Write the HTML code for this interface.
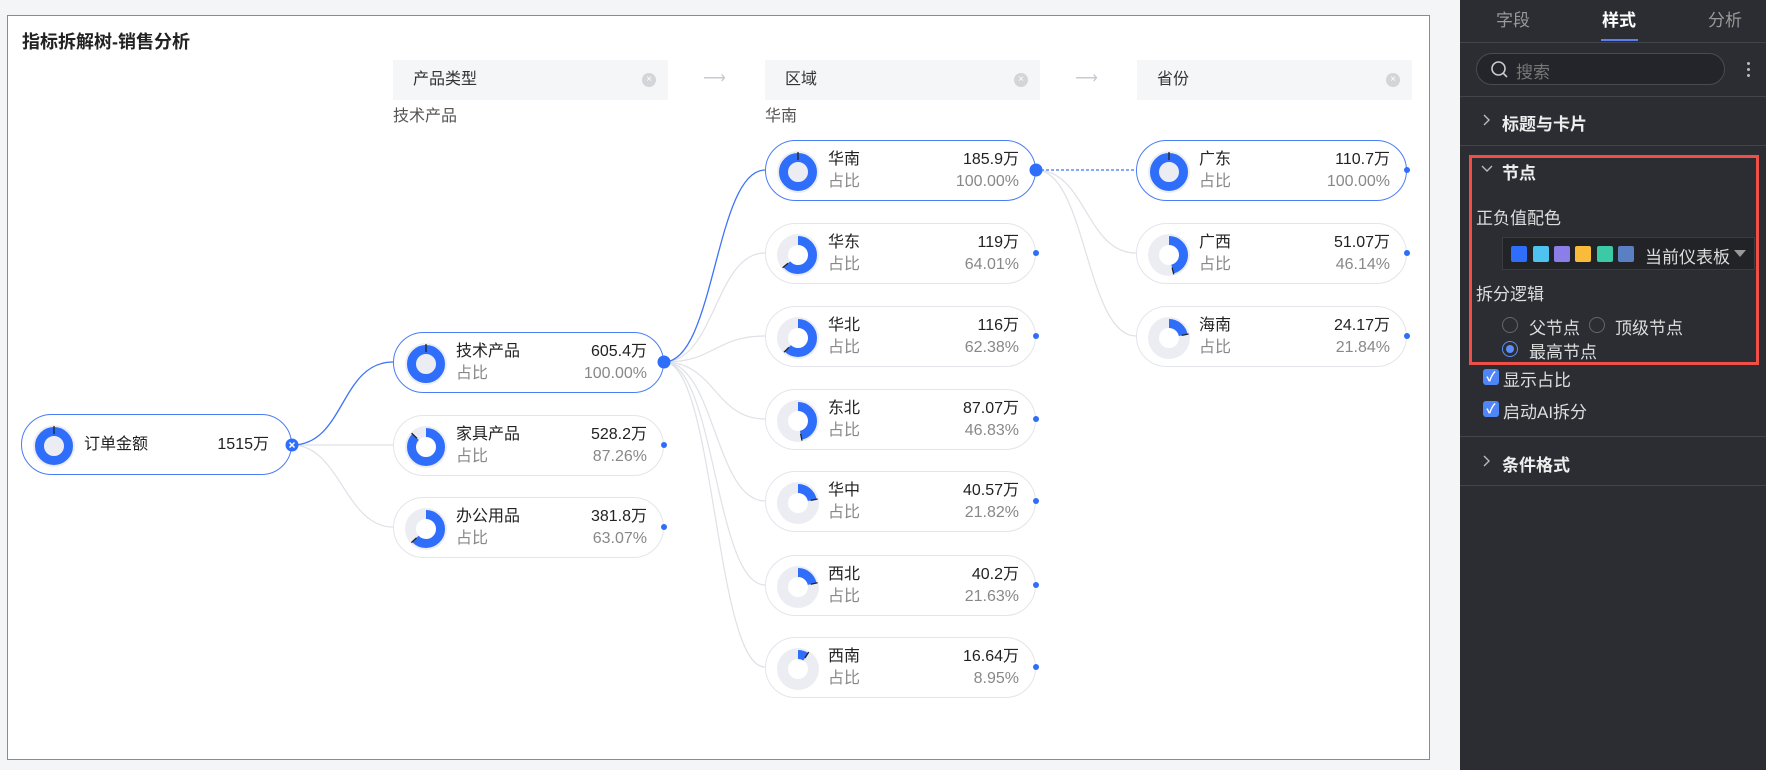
<!DOCTYPE html>
<html><head><meta charset="utf-8"><style>
*{box-sizing:border-box;margin:0;padding:0}
body{width:1766px;height:770px;background:#f4f5f7;position:relative;overflow:hidden;font-family:"Liberation Sans","Noto Sans CJK SC",sans-serif;color:#333}
.card{position:absolute;left:7px;top:15px;width:1423px;height:745px;background:#fff;border:1.5px solid #5b8ef8}
.title{position:absolute;left:22px;top:28px;font-size:18px;font-weight:bold;color:#222}
.hd{position:absolute;top:60px;width:275px;height:40px;background:#f5f6f8;font-size:16px;line-height:40px;padding-left:20px;color:#333}
.hd i{position:absolute;right:12px;top:13px;width:14px;height:14px;border-radius:50%;background:#d4d5d9;color:#fff;font-style:normal;font-size:10px;line-height:14px;text-align:center}
.arr{position:absolute;top:68px;color:#c8cad0;font-size:16px}
.sub{position:absolute;top:102px;font-size:16px;color:#555}
.n{position:absolute;width:271px;height:61px;border:1px solid #e3e5ea;border-radius:31px;background:#fff}
.n.a{border-color:#4a7cf7}
.n svg{position:absolute;left:10px;top:9px}
.t1,.t2,.v1,.v2{position:absolute;font-size:16px;line-height:20px;white-space:nowrap}
.t1{left:62px;top:9px;color:#222}.t2{left:62px;top:31px;color:#888}
.v1{right:16px;top:9px;color:#222}.v2{right:16px;top:31px;color:#888}
.t0{left:62px;top:20px;color:#222}.v0{right:22px;top:20px;color:#222}
.panel{position:absolute;left:1460px;top:0;width:306px;height:770px;background:#2c2d32}
.pt{position:absolute;font-size:17px;white-space:nowrap;color:#ddd}
.b{font-weight:bold;color:#eee}
.sw{position:absolute;top:246px;width:16px;height:16px;border-radius:2px}
.rd{position:absolute;width:16px;height:16px;border-radius:50%;border:1px solid #666}
.cb{position:absolute;left:1483px;width:16px;height:16px;border-radius:3px;background:#4f86f7;color:#fff;font-size:13px;line-height:16px;text-align:center;font-weight:bold}
</style></head><body>
<div class="card"></div>
<div class="title">指标拆解树-销售分析</div>

<div class="hd" style="left:393px">产品类型<i>×</i></div>
<div class="hd" style="left:765px">区域<i>×</i></div>
<div class="hd" style="left:1137px">省份<i>×</i></div>
<div class="arr" style="left:703px">⟶</div>
<div class="arr" style="left:1075px">⟶</div>
<div class="sub" style="left:393px">技术产品</div>
<div class="sub" style="left:765px">华南</div>

<svg style="position:absolute;left:0;top:0" width="1460" height="770">
<g fill="none" stroke="#dfe1e7" stroke-width="1.2">
<path d="M292 445 C340 445,345 445,393 445"/>
<path d="M292 445 C340 445,345 527,393 527"/>
<path d="M664 362 C715 362,715 253,765 253"/>
<path d="M664 362 C715 362,715 336,765 336"/>
<path d="M664 362 C715 362,715 419,765 419"/>
<path d="M664 362 C715 362,715 501,765 501"/>
<path d="M664 362 C715 362,715 585,765 585"/>
<path d="M664 362 C715 362,715 667,765 667"/>
<path d="M1036 170 C1086 170,1086 253,1136 253"/>
<path d="M1036 170 C1086 170,1086 336,1136 336"/>
</g>
<path d="M292 445 C345 445,340 362,393 362" fill="none" stroke="#3d74f6" stroke-width="1.3"/>
<path d="M664 362 C715 362,715 170,765 170" fill="none" stroke="#3d74f6" stroke-width="1.3"/>
<path d="M1036 170 L1136 170" fill="none" stroke="#3d74f6" stroke-width="1.3" stroke-dasharray="3 2"/>
</svg>

<div class="n a" style="left:21px;top:414px">
<svg width="44" height="44"><circle cx="22" cy="22" r="21" fill="#ebedf2"/><circle cx="22" cy="22" r="14.5" fill="none" stroke="#2f6dfb" stroke-width="9"/><line x1="22" y1="2" x2="22" y2="10" stroke="#222" stroke-width="1.3"/></svg>
<div class="t1 t0">订单金额</div><div class="v1 v0">1515万</div></div>
<svg style="position:absolute;left:285px;top:438px" width="14" height="14"><circle cx="7" cy="7" r="6.5" fill="#2f6dfb"/><path d="M4.5 4.5L9.5 9.5M9.5 4.5L4.5 9.5" stroke="#fff" stroke-width="1.5"/></svg>

<div class="n a" style="left:393px;top:332px">
<svg width="44" height="44"><circle cx="22" cy="22" r="21" fill="#ebedf2"/><circle cx="22" cy="22" r="14.5" fill="none" stroke="#2f6dfb" stroke-width="9"/><line x1="22" y1="2" x2="22" y2="10" stroke="#222" stroke-width="1.3"/></svg>
<div class="t1">技术产品</div><div class="t2">占比</div><div class="v1">605.4万</div><div class="v2">100.00%</div></div>
<div class="n" style="left:393px;top:415px">
<svg width="44" height="44"><circle cx="22" cy="22" r="21" fill="#ebedf2"/><circle cx="22" cy="22" r="10" fill="#fff"/><circle cx="22" cy="22" r="14.5" fill="none" stroke="#2f6dfb" stroke-width="9" stroke-dasharray="79.5 200" transform="rotate(-90 22 22)"/><line x1="7.6" y1="8.1" x2="13" y2="13.3" stroke="#222" stroke-width="1.3"/></svg>
<div class="t1">家具产品</div><div class="t2">占比</div><div class="v1">528.2万</div><div class="v2">87.26%</div></div>
<div class="n" style="left:393px;top:497px">
<svg width="44" height="44"><circle cx="22" cy="22" r="21" fill="#ebedf2"/><circle cx="22" cy="22" r="10" fill="#fff"/><circle cx="22" cy="22" r="14.5" fill="none" stroke="#2f6dfb" stroke-width="9" stroke-dasharray="57.5 200" transform="rotate(-90 22 22)"/><line x1="7.4" y1="35.6" x2="12.5" y2="30.9" stroke="#222" stroke-width="1.3"/></svg>
<div class="t1">办公用品</div><div class="t2">占比</div><div class="v1">381.8万</div><div class="v2">63.07%</div></div>

<div class="n a" style="left:765px;top:140px">
<svg width="44" height="44"><circle cx="22" cy="22" r="21" fill="#ebedf2"/><circle cx="22" cy="22" r="14.5" fill="none" stroke="#2f6dfb" stroke-width="9"/><line x1="22" y1="2" x2="22" y2="10" stroke="#222" stroke-width="1.3"/></svg>
<div class="t1">华南</div><div class="t2">占比</div><div class="v1">185.9万</div><div class="v2">100.00%</div></div>
<div class="n" style="left:765px;top:223px">
<svg width="44" height="44"><circle cx="22" cy="22" r="21" fill="#ebedf2"/><circle cx="22" cy="22" r="10" fill="#fff"/><circle cx="22" cy="22" r="14.5" fill="none" stroke="#2f6dfb" stroke-width="9" stroke-dasharray="58.3 200" transform="rotate(-90 22 22)"/><line x1="6.6" y1="34.7" x2="12" y2="30.3" stroke="#222" stroke-width="1.3"/></svg>
<div class="t1">华东</div><div class="t2">占比</div><div class="v1">119万</div><div class="v2">64.01%</div></div>
<div class="n" style="left:765px;top:306px">
<svg width="44" height="44"><circle cx="22" cy="22" r="21" fill="#ebedf2"/><circle cx="22" cy="22" r="10" fill="#fff"/><circle cx="22" cy="22" r="14.5" fill="none" stroke="#2f6dfb" stroke-width="9" stroke-dasharray="56.8 200" transform="rotate(-90 22 22)"/><line x1="8" y1="36.2" x2="12.9" y2="31.3" stroke="#222" stroke-width="1.3"/></svg>
<div class="t1">华北</div><div class="t2">占比</div><div class="v1">116万</div><div class="v2">62.38%</div></div>
<div class="n" style="left:765px;top:389px">
<svg width="44" height="44"><circle cx="22" cy="22" r="21" fill="#ebedf2"/><circle cx="22" cy="22" r="10" fill="#fff"/><circle cx="22" cy="22" r="14.5" fill="none" stroke="#2f6dfb" stroke-width="9" stroke-dasharray="42.7 200" transform="rotate(-90 22 22)"/><line x1="26" y1="41.6" x2="24.6" y2="34.7" stroke="#222" stroke-width="1.3"/></svg>
<div class="t1">东北</div><div class="t2">占比</div><div class="v1">87.07万</div><div class="v2">46.83%</div></div>
<div class="n" style="left:765px;top:471px">
<svg width="44" height="44"><circle cx="22" cy="22" r="21" fill="#ebedf2"/><circle cx="22" cy="22" r="10" fill="#fff"/><circle cx="22" cy="22" r="14.5" fill="none" stroke="#2f6dfb" stroke-width="9" stroke-dasharray="19.9 200" transform="rotate(-90 22 22)"/><line x1="41.6" y1="18" x2="34.7" y2="19.4" stroke="#222" stroke-width="1.3"/></svg>
<div class="t1">华中</div><div class="t2">占比</div><div class="v1">40.57万</div><div class="v2">21.82%</div></div>
<div class="n" style="left:765px;top:555px">
<svg width="44" height="44"><circle cx="22" cy="22" r="21" fill="#ebedf2"/><circle cx="22" cy="22" r="10" fill="#fff"/><circle cx="22" cy="22" r="14.5" fill="none" stroke="#2f6dfb" stroke-width="9" stroke-dasharray="19.7 200" transform="rotate(-90 22 22)"/><line x1="41.6" y1="17.8" x2="34.7" y2="19.3" stroke="#222" stroke-width="1.3"/></svg>
<div class="t1">西北</div><div class="t2">占比</div><div class="v1">40.2万</div><div class="v2">21.63%</div></div>
<div class="n" style="left:765px;top:637px">
<svg width="44" height="44"><circle cx="22" cy="22" r="21" fill="#ebedf2"/><circle cx="22" cy="22" r="10" fill="#fff"/><circle cx="22" cy="22" r="14.5" fill="none" stroke="#2f6dfb" stroke-width="9" stroke-dasharray="8.2 200" transform="rotate(-90 22 22)"/><line x1="32.7" y1="5.1" x2="28.9" y2="11" stroke="#222" stroke-width="1.3"/></svg>
<div class="t1">西南</div><div class="t2">占比</div><div class="v1">16.64万</div><div class="v2">8.95%</div></div>

<div class="n a" style="left:1136px;top:140px">
<svg width="44" height="44"><circle cx="22" cy="22" r="21" fill="#ebedf2"/><circle cx="22" cy="22" r="14.5" fill="none" stroke="#2f6dfb" stroke-width="9"/><line x1="22" y1="2" x2="22" y2="10" stroke="#222" stroke-width="1.3"/></svg>
<div class="t1">广东</div><div class="t2">占比</div><div class="v1">110.7万</div><div class="v2">100.00%</div></div>
<div class="n" style="left:1136px;top:223px">
<svg width="44" height="44"><circle cx="22" cy="22" r="21" fill="#ebedf2"/><circle cx="22" cy="22" r="10" fill="#fff"/><circle cx="22" cy="22" r="14.5" fill="none" stroke="#2f6dfb" stroke-width="9" stroke-dasharray="42 200" transform="rotate(-90 22 22)"/><line x1="26.8" y1="41.4" x2="25.1" y2="34.6" stroke="#222" stroke-width="1.3"/></svg>
<div class="t1">广西</div><div class="t2">占比</div><div class="v1">51.07万</div><div class="v2">46.14%</div></div>
<div class="n" style="left:1136px;top:306px">
<svg width="44" height="44"><circle cx="22" cy="22" r="21" fill="#ebedf2"/><circle cx="22" cy="22" r="10" fill="#fff"/><circle cx="22" cy="22" r="14.5" fill="none" stroke="#2f6dfb" stroke-width="9" stroke-dasharray="19.9 200" transform="rotate(-90 22 22)"/><line x1="41.6" y1="18" x2="34.7" y2="19.4" stroke="#222" stroke-width="1.3"/></svg>
<div class="t1">海南</div><div class="t2">占比</div><div class="v1">24.17万</div><div class="v2">21.84%</div></div>

<svg style="position:absolute;left:0;top:0;pointer-events:none" width="1460" height="770" fill="#2f6dfb">
<circle cx="664" cy="362" r="6.5"/><circle cx="1036" cy="170" r="6.5"/>
<circle cx="664" cy="445" r="3"/><circle cx="664" cy="527" r="3"/>
<circle cx="1036" cy="253" r="3"/><circle cx="1036" cy="336" r="3"/><circle cx="1036" cy="419" r="3"/><circle cx="1036" cy="501" r="3"/><circle cx="1036" cy="585" r="3"/><circle cx="1036" cy="667" r="3"/>
<circle cx="1407" cy="170" r="3"/><circle cx="1407" cy="253" r="3"/><circle cx="1407" cy="336" r="3"/>
</svg>

<div class="panel"></div>
<div class="pt" style="left:1496px;top:6px;color:#999">字段</div>
<div class="pt b" style="left:1602px;top:6px;color:#fff">样式</div>
<div class="pt" style="left:1708px;top:6px;color:#999">分析</div>
<div style="position:absolute;left:1601px;top:39px;width:37px;height:2px;background:#5b7ff0"></div>
<div style="position:absolute;left:1460px;top:42px;width:306px;height:1px;background:#43444a"></div>
<div style="position:absolute;left:1476px;top:53px;width:249px;height:32px;border-radius:16px;border:1px solid #4a4b51;background:#24252a"></div>
<svg style="position:absolute;left:1490px;top:60px" width="20" height="20"><circle cx="8.5" cy="8.5" r="6.5" fill="none" stroke="#ccc" stroke-width="1.6"/><line x1="13.3" y1="13.3" x2="17" y2="17" stroke="#ccc" stroke-width="1.6"/></svg>
<div class="pt" style="left:1516px;top:58px;color:#777">搜索</div>
<div style="position:absolute;left:1747px;top:62px;width:3px;height:3px;background:#bbb;border-radius:50%;box-shadow:0 6px 0 #bbb,0 12px 0 #bbb"></div>
<div style="position:absolute;left:1460px;top:96px;width:306px;height:1px;background:#43444a"></div>
<svg style="position:absolute;left:1480px;top:113px" width="14" height="14"><path d="M4 2L9 7L4 12" fill="none" stroke="#bbb" stroke-width="1.4"/></svg>
<div class="pt b" style="left:1502px;top:110px">标题与卡片</div>
<div style="position:absolute;left:1460px;top:145px;width:306px;height:1px;background:#43444a"></div>
<div style="position:absolute;left:1469px;top:155px;width:290px;height:210px;border:3px solid #ef4f46"></div>
<svg style="position:absolute;left:1480px;top:162px" width="14" height="14"><path d="M2 4L7 9L12 4" fill="none" stroke="#bbb" stroke-width="1.4"/></svg>
<div class="pt b" style="left:1502px;top:159px">节点</div>
<div class="pt" style="left:1476px;top:204px">正负值配色</div>
<div style="position:absolute;left:1502px;top:237px;width:253px;height:33px;background:#222327;border:1px solid #3b3c42"></div>
<div class="sw" style="left:1511px;background:#2f6dfb"></div>
<div class="sw" style="left:1533px;background:#4fc3f0"></div>
<div class="sw" style="left:1554px;background:#8b7ee8"></div>
<div class="sw" style="left:1575px;background:#fbbb3a"></div>
<div class="sw" style="left:1597px;background:#3cc9a5"></div>
<div class="sw" style="left:1618px;background:#5a7fc2"></div>
<div class="pt" style="left:1645px;top:243px">当前仪表板</div>
<svg style="position:absolute;left:1734px;top:250px" width="12" height="8"><path d="M0 0H12L6 7Z" fill="#999"/></svg>
<div class="pt" style="left:1476px;top:280px">拆分逻辑</div>
<div class="rd" style="left:1502px;top:317px"></div>
<div class="pt" style="left:1529px;top:314px">父节点</div>
<div class="rd" style="left:1589px;top:317px"></div>
<div class="pt" style="left:1615px;top:314px">顶级节点</div>
<div class="rd" style="left:1502px;top:341px;border:1.5px solid #5b8ef8"></div>
<div style="position:absolute;left:1506px;top:345px;width:8px;height:8px;border-radius:50%;background:#5b8ef8"></div>
<div class="pt" style="left:1529px;top:338px">最高节点</div>
<div class="cb" style="top:369px">✓</div>
<div class="pt" style="left:1503px;top:366px">显示占比</div>
<div class="cb" style="top:401px">✓</div>
<div class="pt" style="left:1503px;top:398px">启动AI拆分</div>
<div style="position:absolute;left:1460px;top:436px;width:306px;height:1px;background:#43444a"></div>
<svg style="position:absolute;left:1480px;top:454px" width="14" height="14"><path d="M4 2L9 7L4 12" fill="none" stroke="#bbb" stroke-width="1.4"/></svg>
<div class="pt b" style="left:1502px;top:451px">条件格式</div>
<div style="position:absolute;left:1460px;top:485px;width:306px;height:1px;background:#43444a"></div>
</body></html>
